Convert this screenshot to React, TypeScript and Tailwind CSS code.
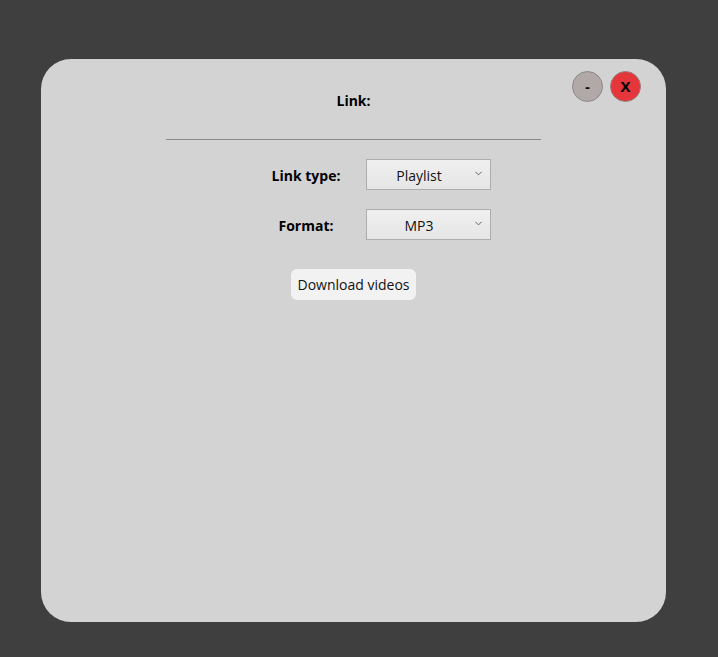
import { ChevronDown } from "lucide-react";

function Select({ value }: { value: string }) {
  return (
    <div className="relative w-[125px] h-[31px] border border-[#adadad] bg-gradient-to-b from-[#f0f0f0] to-[#e5e5e5] flex items-center justify-center pr-[19px] pt-px">
      <span className="text-[14px] text-[#111]">{value}</span>
      <ChevronDown size={11} strokeWidth={1.75} className="absolute right-[6px] top-[8px] text-[#444]" />
    </div>
  );
}

export default function App() {
  return (
    <div
      className="w-[718px] h-[657px] bg-[#3f3f3f] pt-[59px] pl-[41px]"
      style={{ fontFamily: '"Open Sans", "Noto Sans", sans-serif' }}
    >
      <div className="relative w-[625px] h-[563px] bg-[#d3d3d3] rounded-[30px] flex flex-col items-center">
        <div className="absolute top-[12px] right-[25px] flex gap-[7px]">
          <button className="w-[31px] h-[31px] rounded-full bg-[#b1a8a8] border border-[#8f8888] text-black font-bold text-[14px] leading-none">-</button>
          <button className="w-[31px] h-[31px] rounded-full bg-[#e4363b] border border-[#9a7f80] text-black font-bold text-[15px] leading-none">X</button>
        </div>

        <div className="mt-[32px] text-[14px] font-bold text-black leading-[20px]">Link:</div>
        <div className="mt-[28px] w-[375px] h-px bg-[#8a8a8a]" />

        <div className="mt-[19px] self-start pl-[215px] flex flex-col gap-[19px]">
          <div className="flex items-center">
            <div className="w-[100px] text-center text-[14px] font-bold text-black pt-px">Link type:</div>
            <div className="ml-[10px]"><Select value="Playlist" /></div>
          </div>
          <div className="flex items-center">
            <div className="w-[100px] text-center text-[14px] font-bold text-black pt-px">Format:</div>
            <div className="ml-[10px]"><Select value="MP3" /></div>
          </div>
        </div>

        <button className="mt-[29px] w-[125px] h-[31px] rounded-[6px] bg-[#f3f2f3] text-[14px] text-[#111]">
          Download videos
        </button>
      </div>
    </div>
  );
}
